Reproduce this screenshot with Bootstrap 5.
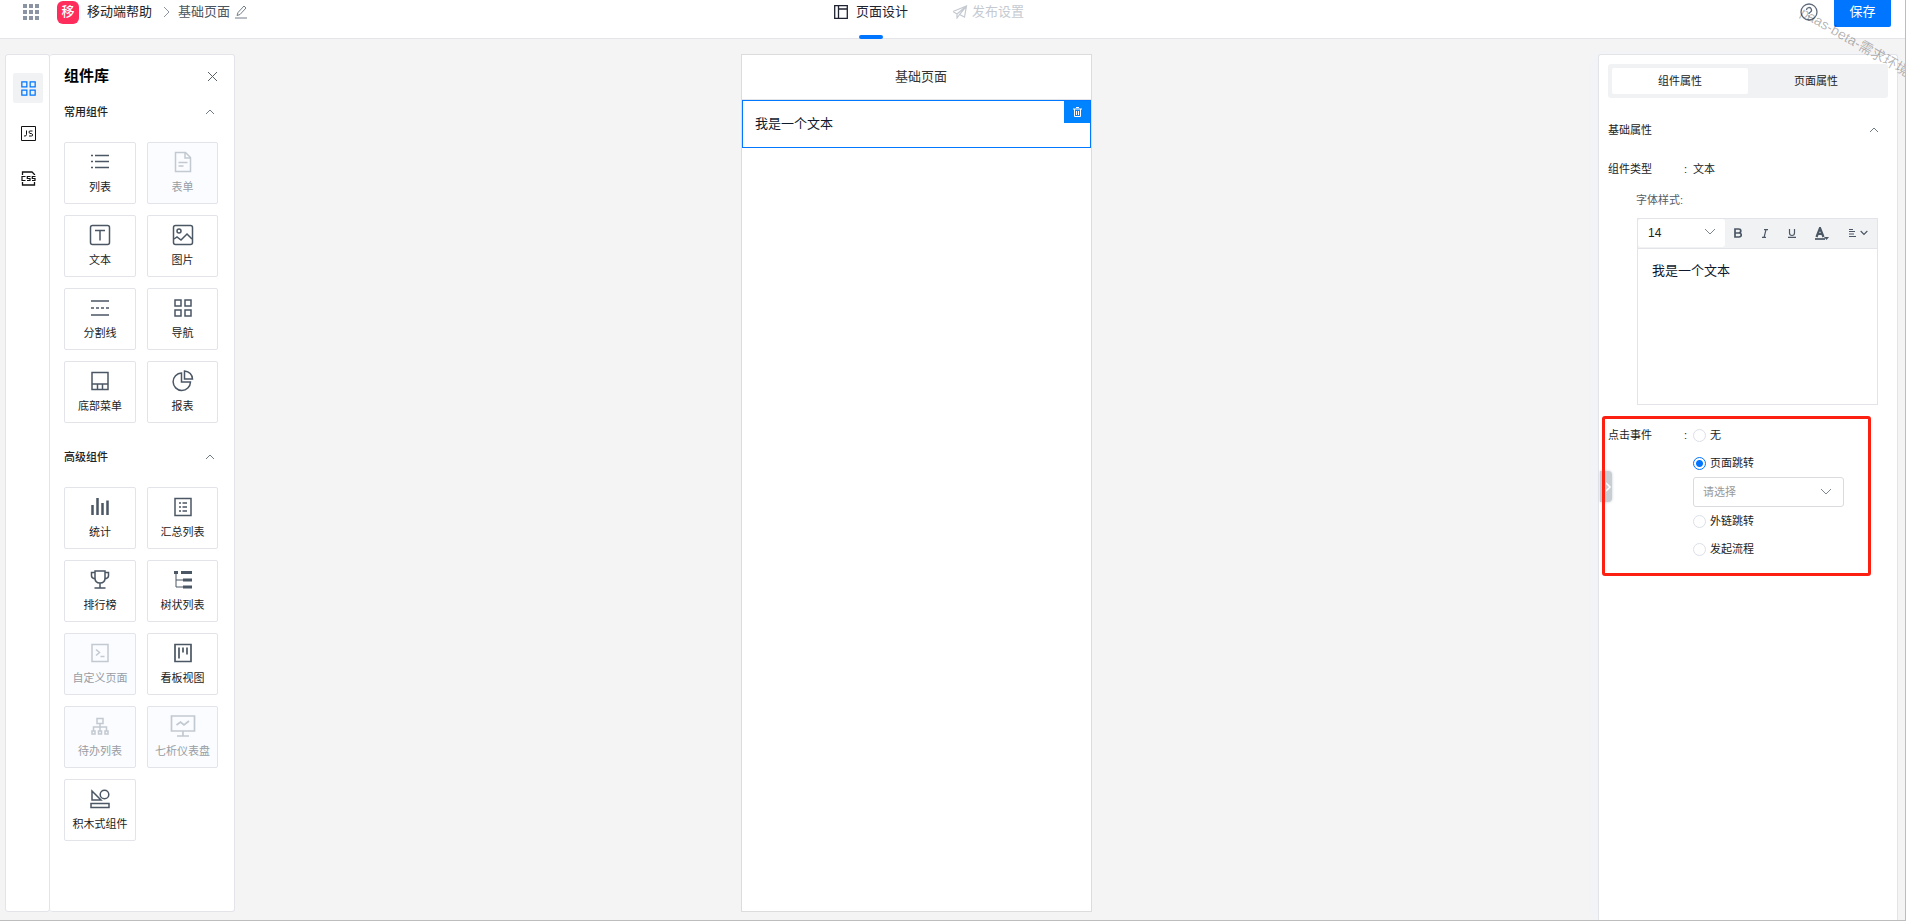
<!DOCTYPE html>
<html lang="zh-CN">
<head>
<meta charset="utf-8">
<meta name="viewport" content="width=device-width, initial-scale=1">
<title>基础页面</title>
<link href="https://cdn.jsdelivr.net/npm/bootstrap@5.3.0/dist/css/bootstrap.min.css" rel="stylesheet">
<style>
  body { font-family: "Liberation Sans", "Noto Sans CJK SC", sans-serif; font-size: 11px; line-height: 16px; color: #222; background: #fff; }
  svg { display: block; fill: none; stroke: currentColor; flex: none; }
  button { color: inherit; }
  .fs-mid { font-size: 13px; }
  .frame-pad { padding: 0 1px 2px 0; background: #fff; height: 100vh; }
  .workspace { height: 100%; overflow: hidden; background: #f4f4f5; border-right: 1px solid #bdbdbd; border-bottom: 1px solid #bdbdbd; position: relative; }
  .bare { border: 0; padding: 0; background: none; }

  .topbar { height: 39px; background: #fff; border-bottom: 1px solid #e4e5e8; }
  .topbar-row { height: 24px; flex: 1; }
  .crumbs { padding-left: 23px; }
  .apps-btn { margin-right: 18px; }
  .apps-btn svg { fill: #8a94a3; stroke: none; }
  .app-logo { width: 22px; height: 23px; border-radius: 6px; background: #ff2d5c; color: #fff; font-size: 13px; font-weight: 500; }
  .crumb-arrow { margin: 0 8px 0 12px; color: #8b95a1; }
  .crumb-page { color: #4b5560; }
  .edit-btn { color: #727d89; }
  .mode-tabs { gap: 44px; margin-right: 56px; }
  .mode-tab { height: 39px; padding-bottom: 15px; color: #c5cad2; text-decoration: none; position: relative; font-size: 13px; }
  .mode-tab.active { color: #1f2330; }
  .mode-tab.active::after { content: ""; position: absolute; left: 50%; bottom: 0; width: 24px; height: 4px; margin-left: -12px; border-radius: 2px; background: #0075ff; }
  .top-actions { gap: 16px; padding-right: 14px; }
  .save-btn { width: 57px; height: 27px; border: 0; border-radius: 0 0 2px 2px; background: #0075ff; color: #fff; font-size: 13px; padding: 0 0 3px; }
  .help-btn { color: #5f6b7a; }

  .stage { min-height: 0; padding: 15px 7px 0 5px; }
  .side-left, .phone { margin-bottom: 8px; }
  .rail, .library, .props { background: #fff; border: 1px solid #e2e4ea; }
  .rail { width: 45px; border-radius: 3px; padding: 18px 0 0 7px; gap: 15px; }
  .rail button { width: 30px; height: 30px; border-radius: 2px; color: #111; }
  .rail button.active { background: #f1f2f4; color: #0075ff; }
  .library { width: 185px; border-left: 0; border-radius: 3px; padding: 11px 16px 0 14px; }
  .library h1 { font-size: 15px; line-height: 20px; font-weight: 700; color: #000; margin: 0; }
  .close-btn { color: #58626d; }
  .section-head { color: #222; width: 100%; }
  .section-head svg { margin-right: 3px; color: #707b88; }
  .library .section-head { font-weight: 500; margin: 18px 0 22px; }
  .library .tiles + .section-head { margin-top: 26px; }
  .tiles { display: grid; grid-template-columns: 72px 71px; gap: 11px; }
  .tile { height: 62px; border: 1px solid #e2e4ea; border-radius: 2px; background: #fff; padding: 7px 0 0; white-space: nowrap; }
  .tile svg { height: 24px; color: #4b5764; margin-bottom: 5px; }
  .tile:disabled { background: #fafcff; color: #999da3; }
  .tile:disabled svg { color: #c3c9d1; }

  .phone { width: 351px; background: #fff; border: 1px solid #dcdcdc; }
  .phone-title { height: 45px; padding-left: 9px; border-bottom: 1px solid #e2e4ea; color: #333; }
  .text-block { height: 48px; border: 1px solid #0078ff; padding-left: 12px; color: #10182c; position: relative; }
  .trash-btn { position: absolute; top: 0; right: 0; width: 26px; height: 22px; background: #0083ff; color: #fff; }

  .props { width: 300px; border-bottom: 0; border-radius: 3px 3px 0 0; padding: 9px 9px 0; position: relative; box-shadow: -6px 0 6px -2px #f0f3f8; }
  .props .section-head { margin-top: 24px; padding-right: 6px; }
  .seg { height: 34px; background: #f1f2f4; border-radius: 3px; padding: 4px; }
  .seg button { border-radius: 2px; flex: 1; }
  .seg button.active { background: #fff; }
  .kind-row { margin-top: 23px; }
  .field-name { width: 76px; }
  .field-colon { width: 9px; }
  .rich-label { margin: 15px 0 10px 28px; color: #555d68; }
  .editor { width: 241px; height: 187px; border: 1px solid #e2e4ea; margin-left: 29px; }
  .editor-bar { height: 30px; background: #f1f2f4; border-bottom: 1px solid #e2e4ea; color: #4b5764; }
  .size-pick { width: 87px; height: 28px; border-radius: 3px; background: #fff; position: relative; align-self: start; }
  .plain-select { appearance: none; border: 0; background: transparent; width: 100%; height: 100%; color: #222; outline: 0; }
  .size-pick select { padding-left: 10px; font-size: 12px; }
  .pick-arrow { position: absolute; right: 11px; top: 50%; margin-top: -4px; pointer-events: none; color: #7c8793; }
  .size-pick .pick-arrow { right: 9px; margin-top: -5px; }
  .editor textarea { height: 155px; border: 0; outline: 0; resize: none; padding: 13px 14px; line-height: 17px; color: #10182c; }
  .tool-row { flex: 1; padding: 0 9px 1px; }
  .event-box { width: 269px; height: 160px; border: 3px solid #fb2012; border-radius: 3px; margin: 11px 0 0 -6px; padding: 8px 0 0 3px; position: relative; z-index: 2; }
  .pick { height: 16px; gap: 4px; }
  .pick + .pick { margin-top: 12px; }
  .pick input { appearance: none; width: 13px; height: 13px; border: 1px solid #dcdfe6; border-radius: 50%; margin: 0; background: #fff; }
  .pick input:checked { border-color: #0075ff; background: radial-gradient(circle, #0075ff 3px, #fff 4px); }
  .page-pick { width: 151px; height: 30px; border: 1px solid #d9dbe0; border-radius: 3px; position: relative; margin: 6px 0; }
  .page-pick select { padding-left: 9px; color: #999; }
  .fold { position: absolute; left: 1px; top: 416px; width: 12px; height: 31px; border-radius: 0 4px 4px 0; background: #c9cdd4; color: #fff; box-shadow: 0 0 3px #c9cdd4; z-index: 1; }
  .watermark { position: absolute; left: calc(100% - 103px); top: 3px; transform: rotate(30deg); transform-origin: 0 50%; font-size: 14px; color: rgba(0,0,0,.3); white-space: nowrap; pointer-events: none; z-index: 5; }
</style>
</head>
<body>
<svg width="0" height="0" class="position-absolute" aria-hidden="true">
  <symbol id="up" viewBox="0 0 10 6"><path d="M1 5 5 1l4 4"/></symbol>
  <symbol id="down" viewBox="0 0 12 8"><path d="m1 1 5 5 5-5"/></symbol>
  <symbol id="four" viewBox="0 0 18 18"><path d="M1 1h6v6H1zM11 1h6v6h-6zM1 11h6v6H1zM11 11h6v6h-6z"/></symbol>
</svg>
<div class="frame-pad">
<div class="workspace d-flex flex-column">
  <header class="topbar d-flex justify-content-between flex-shrink-0">
    <div class="topbar-row crumbs d-flex align-items-center fs-mid">
      <button class="bare apps-btn" aria-label="应用"><svg width="16" height="16" viewBox="0 0 16 16"><path d="M0 0h4v4H0zM6 0h4v4H6zM12 0h4v4h-4zM0 6h4v4H0zM6 6h4v4H6zM12 6h4v4h-4zM0 12h4v4H0zM6 12h4v4H6zM12 12h4v4h-4z"/></svg></button>
      <span class="app-logo d-flex align-items-center justify-content-center me-2">移</span>
      <span>移动端帮助</span>
      <svg class="crumb-arrow" width="6" height="12" viewBox="0 0 6 12"><path d="m0 1 5 5-5 5"/></svg>
      <span class="crumb-page">基础页面</span>
      <button class="bare edit-btn ms-1" aria-label="编辑"><svg width="14" height="14" viewBox="0 0 14 14"><path d="M1 13h12M3 10.500l1-3 6-6.500 2 2-6 6.500z"/></svg></button>
    </div>
    <nav class="mode-tabs d-flex">
      <a href="#" class="mode-tab active d-flex align-items-center gap-2"><svg width="14" height="14" viewBox="0 0 14 14" stroke-width="1.3"><path d="M.7.7h12.6v12.6H.7zM4.5.7v12.6M4.5 4h9"/></svg>页面设计</a>
      <a href="#" class="mode-tab d-flex align-items-center gap-1"><svg width="16" height="14" viewBox="0 0 16 14" stroke-width="1.2"><path d="M1 6.500 14.500 1l-2 11-5-2.500M1 6.500l4 2.500v4l2.500-3.500L14.500 1 5 9"/></svg>发布设置</a>
    </nav>
    <div class="topbar-row top-actions d-flex justify-content-end">
      <button class="bare help-btn" aria-label="帮助"><svg width="18" height="18" viewBox="0 0 18 18" stroke-width="1.3"><circle cx="9" cy="9" r="8"/><path d="M6.500 7a2.500 2.500 0 1 1 3.700 2.200C9.300 9.700 9 10 9 11M9 12.300v1.400"/></svg></button>
      <button class="save-btn">保存</button>
    </div>
  </header>

  <main class="stage d-flex justify-content-between flex-grow-1">
    <div class="side-left d-flex">
      <nav class="rail d-flex flex-column">
        <button class="bare active d-flex align-items-center justify-content-center" aria-label="组件"><svg width="15" height="15" stroke-width="1.5"><use href="#four"/></svg></button>
        <button class="bare d-flex align-items-center justify-content-center" aria-label="JS"><svg width="15" height="15" viewBox="0 0 15 15"><path d="M.5.5h14v14H.5z"/><path d="M5.500 4.500v4q0 2-2.500 1.500M11.500 5H9q-1 0-1 1t1 1.500h1.500q1 .3 1 1.500t-1 1H8"/></svg></button>
        <button class="bare d-flex align-items-center justify-content-center" aria-label="CSS"><svg width="15" height="15" viewBox="0 0 15 15"><path stroke-width="1.300" d="M1.500 4V1h9.500l2.500 2.500V4M1.500 11v3h12v-3"/><path stroke-width="1.200" d="M4.500 5.500H1v4h3.500M9.500 5.500H6.300v2h2.700v2H6M14.500 5.500h-3.200v2H14v2h-3"/></svg></button>
      </nav>
      <section class="library">
        <div class="d-flex justify-content-between align-items-center">
          <h1>组件库</h1>
          <button class="bare close-btn" aria-label="关闭"><svg width="11" height="11" viewBox="0 0 11 11"><path d="m1 1 9 9M10 1l-9 9"/></svg></button>
        </div>
        <button class="bare section-head d-flex justify-content-between align-items-center">常用组件<svg width="10" height="6"><use href="#up"/></svg></button>
        <div class="tiles">
          <button class="tile d-flex flex-column align-items-center"><svg width="20" viewBox="0 0 20 24" stroke-width="1.500"><path d="M5 5.500h14M5 11.500h14M5 17.500h14M1 5.500h2M1 11.500h2M1 17.500h2"/></svg>列表</button>
          <button class="tile d-flex flex-column align-items-center" disabled><svg width="18" viewBox="0 0 18 24" stroke-width="1.500"><path d="M1.500 2.500h10l5 5v14h-15zM11 2.500v5.500h5.500M4.500 12.500h9M4.500 16h5"/></svg>表单</button>
          <button class="tile d-flex flex-column align-items-center"><svg width="22" viewBox="0 0 22 24" stroke-width="1.500"><rect x="1.500" y="2.500" width="19" height="19" rx="2"/><path d="M6 7.500h10M11 7.500v10"/></svg>文本</button>
          <button class="tile d-flex flex-column align-items-center"><svg width="22" viewBox="0 0 22 24" stroke-width="1.500"><rect x="1.500" y="2.500" width="19" height="19" rx="2"/><circle cx="7" cy="8" r="2"/><path d="m2 16 3-2 4 3 6-6 5 5"/></svg>图片</button>
          <button class="tile d-flex flex-column align-items-center"><svg width="18" viewBox="0 0 18 24" stroke-width="1.700"><path d="M0 5h18M0 19h18"/><path stroke-dasharray="3 2" d="M0 12h18"/></svg>分割线</button>
          <button class="tile d-flex flex-column align-items-center"><svg width="18" stroke-width="1.500"><use href="#four"/></svg>导航</button>
          <button class="tile d-flex flex-column align-items-center"><svg width="18" viewBox="0 0 18 24" stroke-width="1.500"><path d="M1 3.500h16v17H1zM1 15h16M6.500 15v5M11.500 15v5"/></svg>底部菜单</button>
          <button class="tile d-flex flex-column align-items-center"><svg width="22" viewBox="0 0 22 24" stroke-width="1.500"><path d="M9.500 4a8.700 8.700 0 1 0 9 9h-9zM12.500 2v8h8q-.5-7-8-8z"/></svg>报表</button>
        </div>
        <button class="bare section-head d-flex justify-content-between align-items-center">高级组件<svg width="10" height="6"><use href="#up"/></svg></button>
        <div class="tiles">
          <button class="tile d-flex flex-column align-items-center"><svg width="18" viewBox="0 0 18 24" stroke-width="2.500"><path d="M1.500 10v10M6.500 3v17M11.500 8v12M16.500 5.500V20"/></svg>统计</button>
          <button class="tile d-flex flex-column align-items-center"><svg width="18" viewBox="0 0 18 24" stroke-width="1.500"><path d="M1 3.500h16v17H1zM5 8h2M8.500 8H13M5 12h2M8.500 12H13M5 16h2M8.500 16H13"/></svg>汇总列表</button>
          <button class="tile d-flex flex-column align-items-center"><svg width="20" viewBox="0 0 20 24" stroke-width="1.500"><path d="M5 3h10v7q0 5-5 5t-5-5zM5 4.500H1.500V8q0 2 3.500 3M15 4.500h3.500V8q0 2-3.500 3M10 15v5M4.500 20h11"/></svg>排行榜</button>
          <button class="tile d-flex flex-column align-items-center"><svg width="18" viewBox="0 0 18 24"><path d="M2 5v14h7M2 12h7"/><path stroke-width="3" d="M0 4.500h4M7 4.500h11M9 12h9M9 19h9"/></svg>树状列表</button>
          <button class="tile d-flex flex-column align-items-center" disabled><svg width="18" viewBox="0 0 18 24" stroke-width="1.500"><path d="M1 3.500h16v17H1zM5 8.500l3.500 3L5 14.500M9.500 15.500h4"/></svg>自定义页面</button>
          <button class="tile d-flex flex-column align-items-center"><svg width="18" viewBox="0 0 18 24" stroke-width="1.700"><path d="M1 3.500h16v17H1zM5 6.500v11M9 6.500v5M13 6.500v7"/></svg>看板视图</button>
          <button class="tile d-flex flex-column align-items-center" disabled><svg width="18" viewBox="0 0 18 24" stroke-width="1.500"><path d="M6 4.500h6v5H6zM9 9.500v7M2.500 16.500v-3.500h13v3.500M1 17h3v3H1zM7.500 17h3v3h-3zM14 17h3v3h-3z"/></svg>待办列表</button>
          <button class="tile d-flex flex-column align-items-center" disabled><svg width="26" viewBox="0 0 26 24" stroke-width="1.700"><path d="M1.500 2h23v15h-23zM13 17v5M7 22h12M6.500 11l4-3 3.500 3 5-4"/></svg>七析仪表盘</button>
          <button class="tile d-flex flex-column align-items-center"><svg width="20" viewBox="0 0 20 24" stroke-width="1.500"><path d="M2 4v9h9zM1 16.500h18v4H1z"/><circle cx="14.500" cy="7.500" r="4.300"/></svg>积木式组件</button>
        </div>
      </section>
    </div>

    <section class="phone">
      <div class="phone-title fs-mid d-flex align-items-center justify-content-center">基础页面</div>
      <div class="text-block fs-mid d-flex align-items-center">我是一个文本
        <button class="bare trash-btn d-flex align-items-center justify-content-center" aria-label="删除"><svg width="9" height="10" viewBox="0 0 9 10"><path d="M0 2h9M3 .5h3M1.500 2v7.500h6V2M3.500 4v4M5.500 4v4"/></svg></button>
      </div>
    </section>

    <aside class="props">
      <div class="seg d-flex"><button class="bare active">组件属性</button><button class="bare">页面属性</button></div>
      <button class="bare section-head d-flex justify-content-between align-items-center">基础属性<svg width="10" height="6"><use href="#up"/></svg></button>
      <div class="kind-row d-flex"><span class="field-name">组件类型</span><span class="field-colon">:</span><span>文本</span></div>
      <label for="rich" class="rich-label d-block">字体样式:</label>
      <div class="editor">
        <div class="editor-bar d-flex align-items-center">
          <div class="size-pick"><select class="plain-select" aria-label="字号"><option>14</option></select><svg class="pick-arrow" width="12" height="8"><use href="#down"/></svg></div>
          <div class="tool-row d-flex align-items-center justify-content-between">
            <button class="bare" aria-label="加粗"><svg width="8" height="10" viewBox="0 0 8 10" stroke-width="1.700"><path d="M1 1h3.500q2.300 0 2.300 2T4.500 5H1zM1 5h4q2.300 0 2.300 2T5 9H1z"/></svg></button>
            <button class="bare" aria-label="斜体"><svg width="6" height="9" viewBox="0 0 6 9" stroke-width="1.200"><path d="M2 .6h4M0 8.400h4M4 .6l-2 8"/></svg></button>
            <button class="bare" aria-label="下划线"><svg width="8" height="9" viewBox="0 0 8 9" stroke-width="1.200"><path d="M1.500 0v4q0 2.500 2.500 2.500T6.500 4V0M0 8.400h8"/></svg></button>
            <button class="bare" aria-label="颜色"><svg width="14" height="13" viewBox="0 0 14 13" stroke-width="2.200"><path d="m1.500 10 3.500-9 3.500 9M3 7h4"/><path stroke-width="1.700" d="M0 12h10"/><path fill="currentColor" stroke="none" d="M9 10h5l-2.500 3z"/></svg></button>
            <button class="bare d-flex align-items-center gap-1" aria-label="对齐"><svg width="7" height="8" viewBox="0 0 7 8"><path d="M0 .5h4M0 2.500h6M0 5h5M0 7.500h7"/></svg><svg width="8" height="6" viewBox="0 0 12 8" stroke-width="1.800"><use href="#down"/></svg></button>
          </div>
        </div>
        <textarea id="rich" class="fs-mid d-block w-100">我是一个文本</textarea>
      </div>
      <div class="event-box d-flex">
        <span class="field-name">点击事件</span><span class="field-colon">:</span>
        <div>
          <label class="pick d-flex align-items-center"><input type="radio" name="ev">无</label>
          <label class="pick d-flex align-items-center"><input type="radio" name="ev" checked>页面跳转</label>
          <div class="page-pick"><select class="plain-select" aria-label="跳转页面"><option>请选择</option></select><svg class="pick-arrow" width="12" height="8"><use href="#down"/></svg></div>
          <label class="pick d-flex align-items-center"><input type="radio" name="ev">外链跳转</label>
          <label class="pick d-flex align-items-center"><input type="radio" name="ev">发起流程</label>
        </div>
      </div>
      <button class="bare fold d-flex align-items-center justify-content-end" aria-label="收起"><svg width="6" height="10" viewBox="0 0 6 10" stroke-width="1.500"><path d="m0 1 4 4-4 4"/></svg></button>
    </aside>
  </main>
  <div class="watermark">paas-beta-需求环境</div>
</div>
</div>
<script src="https://cdn.jsdelivr.net/npm/bootstrap@5.3.0/dist/js/bootstrap.bundle.min.js"></script>
</body>
</html>
